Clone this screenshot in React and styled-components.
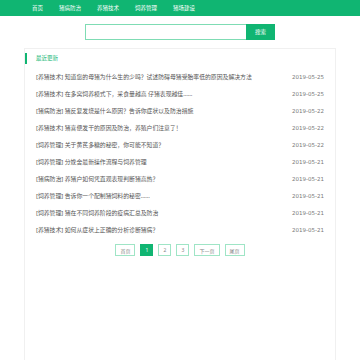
import React from 'react';
import styled, { createGlobalStyle } from 'styled-components';

const GREEN = '#10b572';

const articles = [
    ['养猪技术', '知道您的母猪为什么生的少吗？试述防碍母猪受胎率低的原因及解决方法', '2019-05-25'],
    ['养猪技术', '在多窝饲养模式下，采食量越高 仔猪表现越佳……', '2019-05-25'],
    ['猪病防治', '猪反复发烧是什么原因？告诉你症状以及防治措施', '2019-05-22'],
    ['养猪技术', '猪喜便发干的原因及防治，养殖户们注意了！', '2019-05-22'],
    ['饲养管理', '关于黄芪多糖的秘密，你可能不知道？', '2019-05-22'],
    ['饲养管理', '分娩舍最新操作流程与饲养管理', '2019-05-21'],
    ['猪病防治', '养猪户如何凭直观表现判断猪高热？', '2019-05-21'],
    ['饲养管理', '告诉你一个配制猪饲料的秘密……', '2019-05-21'],
    ['饲养管理', '猪在不同饲养阶段的疫病汇总及防治', '2019-05-21'],
    ['养猪技术', '如何从症状上正确的分析诊断猪病？', '2019-05-21'],
];

const pages = [
    { label: '首页', wide: true },
    { label: '1', active: true },
    { label: '2' },
    { label: '3' },
    { label: '下一页', wide: true },
    { label: '尾页', wide: true },
];

export default function App() {
    return (
        <>
            <GlobalStyle />
            <Nav>
                {['首页', '猪病防治', '养猪技术', '饲养管理', '猪场建设'].map((item) => (
                    <NavItem key={item}>{item}</NavItem>
                ))}
            </Nav>
            <SearchRow>
                <SearchInput />
                <SearchButton>搜索</SearchButton>
            </SearchRow>
            <Card>
                <CardTitle>最近更新</CardTitle>
                <List>
                    {articles.map(([cat, title, date]) => (
                        <Row key={title}>
                            <RowText>[{cat}] {title}</RowText>
                            <RowDate>{date}</RowDate>
                        </Row>
                    ))}
                </List>
                <Pager>
                    {pages.map((p) => (
                        <PageBtn key={p.label} $active={p.active} $wide={p.wide}>{p.label}</PageBtn>
                    ))}
                </Pager>
            </Card>
        </>
    );
}

const GlobalStyle = createGlobalStyle`
    html, body {
        margin: 0;
        padding: 0;
        background: #fff;
        font-family: "Noto Sans", "Noto Sans CJK SC", sans-serif;
    }
`;

const Nav = styled.nav`
    height: 16px;
    background: ${GREEN};
    display: flex;
    align-items: center;
    padding-left: 32px;
    gap: 16px;
`;

const NavItem = styled.a`
    color: #fff;
    font-size: 5.5px;
    line-height: 16px;
`;

const SearchRow = styled.div`
    display: flex;
    justify-content: center;
    margin-top: 8px;
    height: 16px;
`;

const SearchInput = styled.div`
    width: 160px;
    height: 14px;
    border: 1px solid #7fdcb4;
    border-right: none;
    background: #fff;
`;

const SearchButton = styled.button`
    width: 29px;
    height: 16px;
    border: none;
    padding: 0;
    background: ${GREEN};
    color: #fff;
    font-family: "Noto Sans", "Noto Sans CJK SC", sans-serif;
    font-size: 5.5px;
`;

const Card = styled.section`
    margin: 8px 24px 0;
    border: 1px solid #f0f0f0;
    border-bottom: none;
    min-height: 320px;
    box-sizing: border-box;
`;

const CardTitle = styled.h2`
    margin: 4px 0 0;
    height: 11px;
    border-left: 2px solid ${GREEN};
    padding-left: 9px;
    color: ${GREEN};
    font-size: 5.5px;
    font-weight: normal;
    line-height: 11px;
`;

const List = styled.ul`
    list-style: none;
    margin: 4px 0 0;
    padding: 0 11px 0 11px;
`;

const Row = styled.li`
    display: flex;
    justify-content: space-between;
    align-items: center;
    height: 17px;
`;

const RowText = styled.span`
    color: #555;
    font-size: 5.85px;
`;

const RowDate = styled.span`
    color: #777;
    font-size: 5.5px;
    font-family: "DejaVu Sans", sans-serif;
`;

const Pager = styled.div`
    display: flex;
    justify-content: center;
    gap: 5px;
    margin-top: 6px;
`;

const PageBtn = styled.a`
    box-sizing: border-box;
    height: 12px;
    min-width: 13px;
    padding: 0 ${(p) => (p.$wide ? '4px' : '0')};
    border: 1px solid ${(p) => (p.$active ? GREEN : '#9fe5c6')};
    background: ${(p) => (p.$active ? GREEN : '#fff')};
    color: ${(p) => (p.$active ? '#fff' : '#888')};
    font-size: 5px;
    display: flex;
    align-items: center;
    justify-content: center;
`;
